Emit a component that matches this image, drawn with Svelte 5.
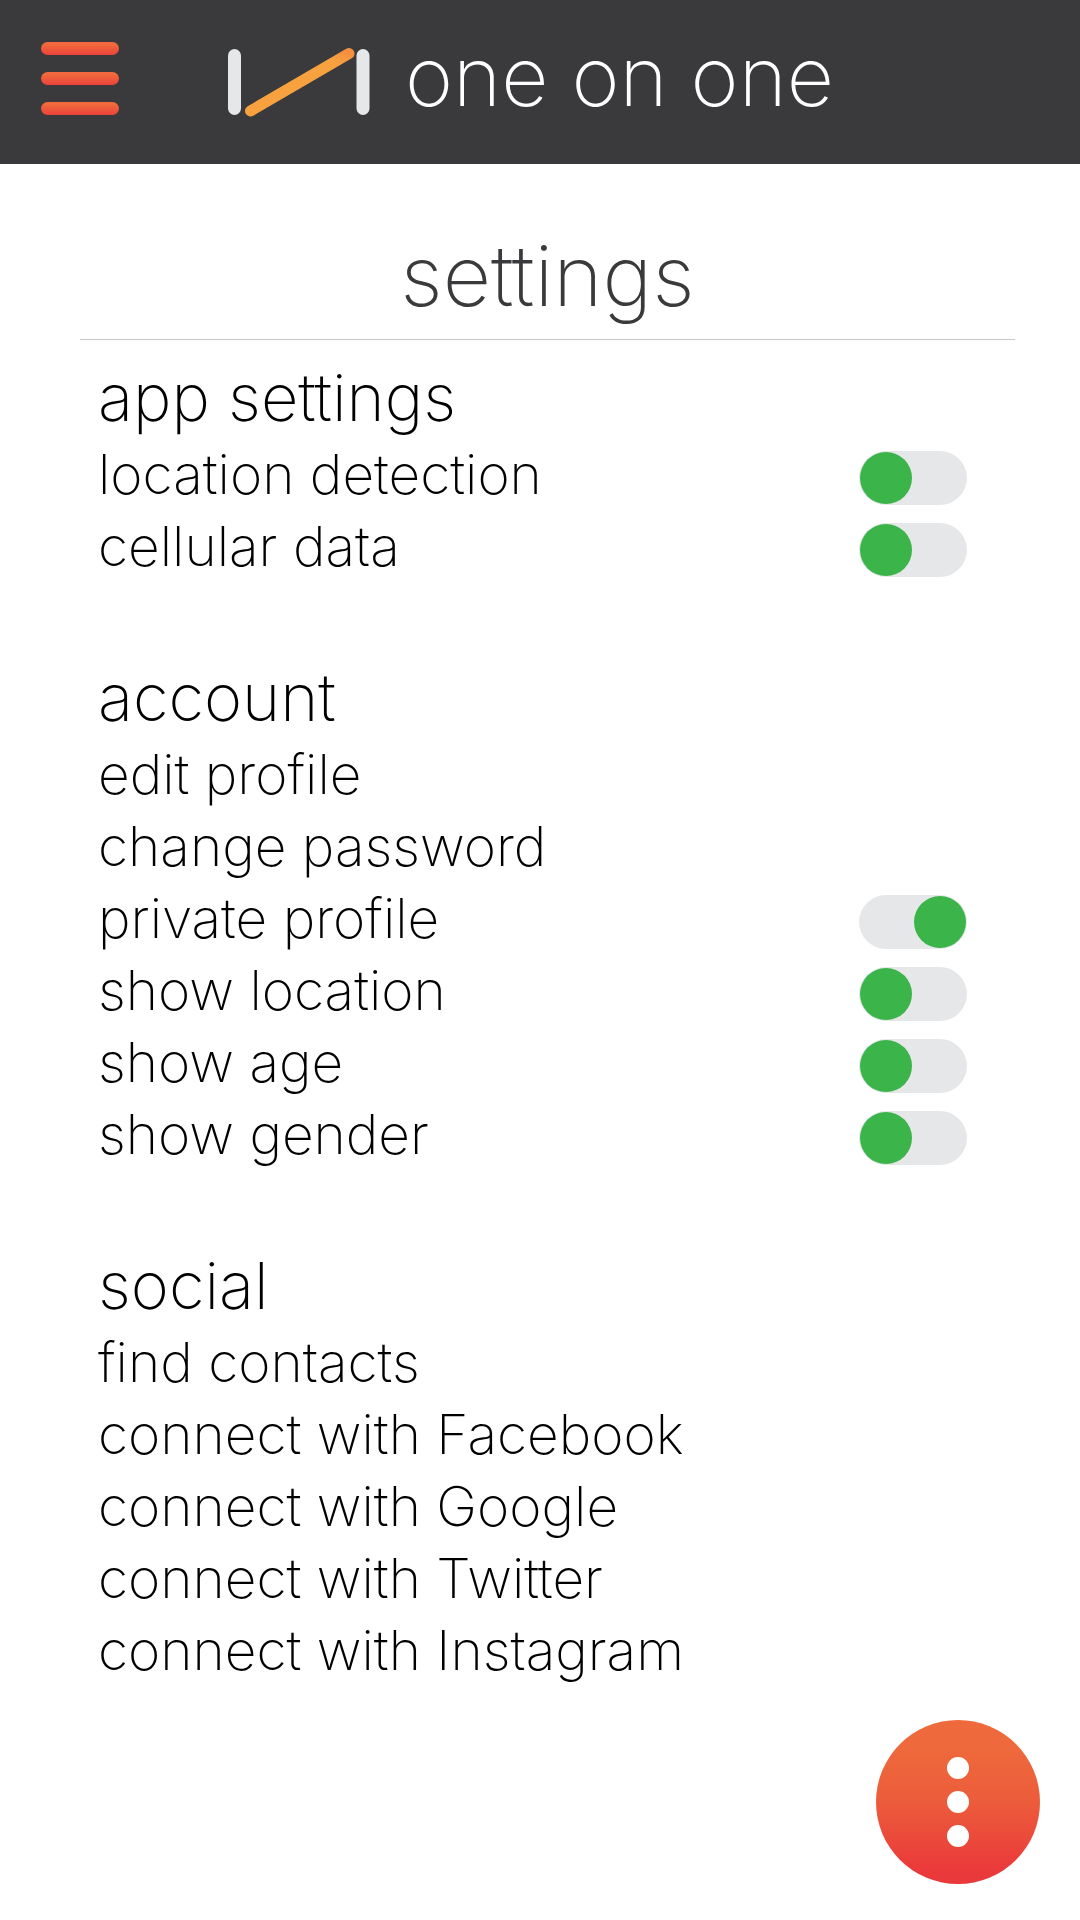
<script>
  let groups = $state([
    {
      title: 'app settings',
      items: [
        { label: 'location detection', toggle: true, on: false },
        { label: 'cellular data', toggle: true, on: false }
      ]
    },
    {
      title: 'account',
      items: [
        { label: 'edit profile' },
        { label: 'change password' },
        { label: 'private profile', toggle: true, on: true },
        { label: 'show location', toggle: true, on: false },
        { label: 'show age', toggle: true, on: false },
        { label: 'show gender', toggle: true, on: false }
      ]
    },
    {
      title: 'social',
      items: [
        { label: 'find contacts' },
        { label: 'connect with Facebook' },
        { label: 'connect with Google' },
        { label: 'connect with Twitter' },
        { label: 'connect with Instagram' }
      ]
    }
  ]);
</script>

<div class="page">
  <header>
    <button class="menu" aria-label="Open menu">
      <span></span>
      <span></span>
      <span></span>
    </button>
    <div class="brand">
      <svg class="logo" width="142" height="70" viewBox="0 0 142 70" aria-hidden="true">
        <defs>
          <linearGradient id="slash" x1="0" y1="1" x2="1" y2="0">
            <stop offset="0.85" stop-color="#f7a23f" />
            <stop offset="1" stop-color="#f4903f" />
          </linearGradient>
        </defs>
        <rect x="0" y="2" width="13" height="66" rx="6.5" fill="#e6e7e8" />
        <rect x="128.500" y="2" width="13" height="66" rx="6.5" fill="#e6e7e8" />
        <path d="M22.500 64 L121 6.500" stroke="url(#slash)" stroke-width="11" stroke-linecap="round" />
      </svg>
      <span class="name">one on one</span>
    </div>
  </header>

  <main>
    <h1>settings</h1>
    <div class="groups">
      {#each groups as group}
        <section>
          <h2>{group.title}</h2>
          <ul>
            {#each group.items as item}
              <li>
                {#if item.toggle}
                  <label>
                    <span>{item.label}</span>
                    <input type="checkbox" role="switch" bind:checked={item.on} />
                  </label>
                {:else}
                  <a href="#{item.label.replaceAll(' ', '-')}">{item.label}</a>
                {/if}
              </li>
            {/each}
          </ul>
        </section>
      {/each}
    </div>
  </main>

  <button class="more" aria-label="More options">
    <span></span>
    <span></span>
    <span></span>
  </button>
</div>

<style>
  :global(body) {
    margin: 0;
    background: #fff;
  }
  .page {
    min-height: 100vh;
    font-family: Inter, 'Liberation Sans', sans-serif;
    font-weight: 150;
    color: #000;
  }
  header {
    display: flex;
    align-items: center;
    gap: 109px;
    height: 164px;
    padding: 0 41px;
    box-sizing: border-box;
    background: #3a3a3c;
  }
  button {
    border: 0;
    padding: 0;
    cursor: pointer;
  }
  .menu {
    display: flex;
    flex-direction: column;
    gap: 17px;
    width: 78px;
    margin-bottom: 8px;
    background: none;
  }
  .menu span {
    height: 13px;
    border-radius: 7px;
    background: linear-gradient(#f1693c 20%, #eb423a);
  }
  .brand {
    display: flex;
    align-items: center;
    gap: 35px;
  }
  .logo {
    display: block;
  }
  .name {
    font-size: 82px;
    font-weight: 200;
    line-height: 100px;
    margin-bottom: 10px;
    color: #fff;
    white-space: nowrap;
  }
  h1,
  h2,
  ul {
    margin: 0;
    padding: 0;
  }
  main {
    margin: 0 65px 0 80px;
    padding-top: 62px;
  }
  h1 {
    padding-bottom: 13px;
    border-bottom: 1px solid #c8c9cb;
    font-size: 84px;
    font-weight: 200;
    line-height: 100px;
    text-align: center;
    color: #3a3a3c;
  }
  .groups {
    display: flex;
    flex-direction: column;
    gap: 76px;
    padding: 18px 48px 0 18px;
  }
  h2 {
    font-size: 65px;
    font-weight: 150;
    line-height: 80px;
  }
  ul {
    list-style: none;
  }
  label,
  a {
    display: flex;
    align-items: center;
    justify-content: space-between;
    font-size: 55px;
    line-height: 72px;
    color: inherit;
    text-decoration: none;
  }
  input {
    appearance: none;
    display: flex;
    width: 108px;
    height: 54px;
    margin: 8px 0 0;
    padding: 1px;
    box-sizing: border-box;
    border-radius: 27px;
    background: #e6e7e8;
    cursor: pointer;
  }
  input::before {
    content: '';
    width: 52px;
    height: 52px;
    border-radius: 50%;
    background: #3bb54a;
  }
  input:checked {
    justify-content: flex-end;
  }
  .more {
    position: fixed;
    right: 40px;
    bottom: 36px;
    display: flex;
    flex-direction: column;
    align-items: center;
    justify-content: center;
    gap: 12px;
    width: 164px;
    height: 164px;
    border-radius: 50%;
    background: linear-gradient(#ee6a3c 15%, #ec5c3b 50%, #ea393a 92%);
  }
  .more span {
    width: 22px;
    height: 22px;
    border-radius: 50%;
    background: #fff;
  }
</style>
